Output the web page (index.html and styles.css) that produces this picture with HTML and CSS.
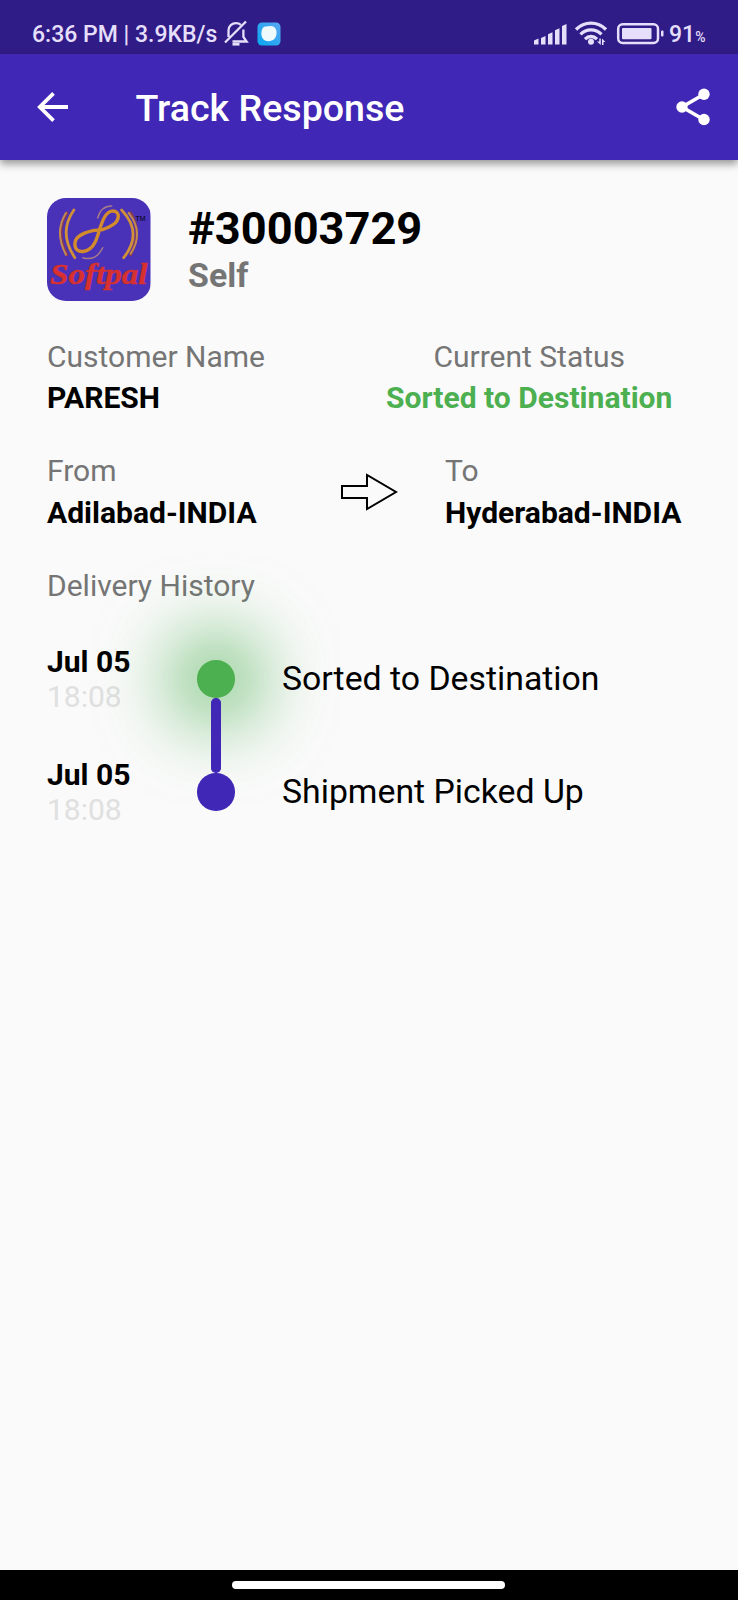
FILE: index.html
```html
<!DOCTYPE html>
<html lang="en">
<head>
<meta charset="utf-8">
<title>Track Response</title>
<link rel="stylesheet" href="styles.css">
</head>
<body>
<div class="screen">
  <div class="statusbar">
    <span class="clock">6:36 PM | 3.9KB/s</span>
    <svg class="bell" width="26" height="28" viewBox="0 0 26 28" fill="none" stroke="#e6dffb" stroke-width="2.3">
      <path d="M5.5 17V10.500C5.500 6 9 3.200 13 3.200c2 0 3.600.6 4.800 1.700M20.400 9.500v7.500l3.200 4.500H9.500M2 22.500 23 1.500"/>
      <path d="M9.500 24.300h7" stroke-width="2.600"/>
    </svg>
    <svg class="app" width="24" height="24" viewBox="0 0 24 24">
      <defs><linearGradient id="sky" x1="1" y1="0" x2="0" y2="1"><stop offset="0" stop-color="#5aa6f2"/><stop offset="1" stop-color="#08a8f0"/></linearGradient></defs>
      <rect x=".5" y=".5" width="23" height="23" rx="4.500" fill="url(#sky)"/>
      <path d="M7 4.800 13 4c4-.4 6.600 2.500 6.600 6.500 0 5.500-3.400 8.700-8 8.700-4.500 0-7.200-3-7.200-7.500 0-3 .8-5.500 2.600-6.900z" fill="#effafd"/>
    </svg>
    <svg class="signals" width="134" height="28" viewBox="0 0 134 28" fill="#e6dffb">
      <path d="M1 19.500 5.500 17.500V23.500H1zM8 17l4.500-2v8.500H8zM15 13.300l4.500-2v12.200H15zM22 9.300l4.500-2v16.200H22zM29 5l4.500-2v20.500H29z"/>
      <g fill="none" stroke="#e6dffb" stroke-width="3.300">
        <path d="M43 8.500C51.500 0 64.500 0 73 8.500M47.500 13.400c6-6 15-6 21 0M52 18.200c3.600-3.600 8.400-3.600 12 0"/>
      </g>
      <circle cx="58" cy="20.800" r="3"/>
      <path d="M64 20.500h2.300V17.500h1.500v6.500zM69 17.500l3.400 3.500H70.500V24H69z"/>
      <rect x="85.200" y="3.200" width="39.800" height="18.800" rx="4.500" fill="none" stroke="#e6dffb" stroke-width="2.500"/>
      <rect x="89" y="7" width="29.500" height="11.200" rx="1"/>
      <rect x="128" y="9.500" width="2.500" height="6" rx="1"/>
    </svg>
    <span class="level">91<small>%</small></span>
  </div>
  <header class="appbar">
    <svg class="back" width="32" height="32" viewBox="0 0 32 32" fill="none" stroke="#fff" stroke-width="3.800"><path d="M31 16H3.500M16.500 2.300 2.800 16l13.700 13.700"/></svg>
    <h1 class="title">Track Response</h1>
    <svg class="share" width="34" height="38" viewBox="0 0 34 38" fill="#fff" stroke="#fff"><path d="M28 6.300 6 19l22 12.700" fill="none" stroke-width="3.600"/><circle cx="28" cy="6.300" r="5.700" stroke="none"/><circle cx="6" cy="19" r="5.700" stroke="none"/><circle cx="28" cy="31.500" r="5.700" stroke="none"/></svg>
  </header>
  <main class="content">
    <section class="shipment">
      <svg class="logo" viewBox="0 0 104 104">
        <rect width="104" height="104" fill="#4932b8"/>
        <g fill="none" stroke-linecap="round">
          <path d="M51 20Q54 8 65 8M36 60q13 4 20-10" stroke="#a87b88" stroke-width="1.500"/>
          <path d="M55 32C45 32 28 36 28 46c0 12 15 9 20-1 5-9 7-31 18-32 8 0 7 10 0 14-3 2-7 4-11 5z" stroke="#d38b2b" stroke-width="3.400"/>
          <path d="M20 15Q8 34 20 57M84 15q12 19 0 42" stroke="#8a3a50" stroke-width="3"/>
          <path d="M27 12Q11 35 28 60M75 12q22 23 2 48" stroke="#d09038" stroke-width="2.800"/>
          <path d="M19 15Q7 34 19 57M82 15q16 20 2 41" stroke="#c08a55" stroke-width="2"/>
        </g>
        <text class="tm" x="89" y="23" textLength="10" lengthAdjust="spacingAndGlyphs">TM</text>
        <text class="brand" x="3" y="86.500" textLength="98" lengthAdjust="spacingAndGlyphs">Softpal</text>
      </svg>
      <div>
        <div class="number">#30003729</div>
        <div class="kind">Self</div>
      </div>
    </section>
    <section class="pair">
      <div><div class="label">Customer Name</div><div class="value">PARESH</div></div>
      <div class="status"><div class="label">Current Status</div><div class="value green">Sorted to Destination</div></div>
    </section>
    <section class="route">
      <div><div class="label">From</div><div class="value">Adilabad-INDIA</div></div>
      <svg width="58" height="38" viewBox="0 0 58 38" fill="none" stroke="#000" stroke-width="2"><path d="M2 13h25V2l29 17-29 17V25H2z"/></svg>
      <div class="to"><div class="label">To</div><div class="value">Hyderabad-INDIA</div></div>
    </section>
    <h2 class="label history">Delivery History</h2>
    <ul class="timeline">
      <li class="event">
        <div><div class="value day">Jul 05</div><div class="time">18:08</div></div>
        <span class="dot current"></span>
        <span class="what">Sorted to Destination</span>
      </li>
      <li class="event">
        <div><div class="value day">Jul 05</div><div class="time">18:08</div></div>
        <span class="dot"></span>
        <span class="what">Shipment Picked Up</span>
      </li>
    </ul>
  </main>
  <footer class="navbar"><span class="handle"></span></footer>
</div>
</body>
</html>
```
FILE: styles.css
```css
* { box-sizing: border-box; }
body {
  margin: 0;
  background: #fafafa;
  font-family: Roboto, "Liberation Sans", sans-serif;
  color: #000;
}
.screen {
  width: 738px;
  height: 1600px;
  display: flex;
  flex-direction: column;
  overflow: hidden;
}
.statusbar {
  height: 54.400px;
  flex: none;
  background: #301c86;
  color: #e6dffb;
  display: flex;
  align-items: flex-start;
  padding: 21px 30px 0 32px;
  font-size: 23px;
  font-weight: 500;
  line-height: 28px;
}
.clock { width: 191px; white-space: nowrap; }
.bell { margin-top: -1px; }
.app { margin: 1px 0 0 8px; }
.signals { margin-left: auto; }
.level { width: 39px; margin-left: 2px; white-space: nowrap; }
.level small { font-size: 14px; }
.appbar {
  height: 105.600px;
  flex: none;
  background: #4027b5;
  display: flex;
  align-items: center;
  padding: 0 28px 0 37px;
  box-shadow: 0 4px 8px rgba(0, 0, 0, .4);
  z-index: 1;
}
.title {
  margin: 1px auto 0 66.500px;
  font-size: 37.600px;
  font-weight: 500;
  line-height: 44px;
  color: #fff;
}
.content { flex: 1; padding: 37.700px 47px 0; }
.shipment { display: flex; align-items: center; gap: 37.600px; height: 103.500px; }
.logo { width: 103.500px; height: 103.500px; border-radius: 18.800px; }
.brand { font: italic bold 30px "Liberation Serif", serif; fill: #d6302f; stroke: #d6302f; stroke-width: .5px; }
.tm { font: 8px "Liberation Sans", sans-serif; }
.number { font-size: 45.200px; font-weight: 700; line-height: 53px; }
.kind { font-size: 33.900px; font-weight: 700; line-height: 41px; color: #757575; }
.pair {
  display: grid;
  grid-template-columns: 1fr 1fr;
  margin-top: 37.600px;
}
.status { text-align: center; padding-right: 1.500px; }
.label { font-size: 30px; line-height: 35.300px; color: #757575; font-weight: 400; }
.value { font-size: 30.050px; line-height: 35.300px; font-weight: 700; margin-top: 6px; white-space: nowrap; }
.green { color: #4caf50; }
.route {
  display: grid;
  grid-template-columns: 1fr 58px 1fr;
  align-items: center;
  margin-top: 38px;
}
.to { padding-left: 47px; }
.history { margin: 38px 0 19.500px; }
.timeline { list-style: none; margin: 0; padding: 0; }
.event {
  display: grid;
  grid-template-columns: 150.400px 37.600px 1fr;
  align-items: center;
  height: 112.900px;
}
.day { margin: 0; }
.time { font-size: 30px; line-height: 35.300px; color: #e0e0e0; }
.dot {
  width: 37.600px;
  height: 37.600px;
  border-radius: 50%;
  background: #4027b5;
  position: relative;
}
.current { background: #4caf50; box-shadow: 0 0 70px 29px rgba(76, 175, 80, .65); }
.current::after {
  content: "";
  position: absolute;
  left: 14px;
  top: 37.600px;
  width: 9.400px;
  height: 75.300px;
  border-radius: 4.700px;
  background: #4027b5;
}
.what { padding-left: 47px; font-size: 33.800px; line-height: 40px; position: relative; }
.navbar {
  height: 30px;
  flex: none;
  background: #000;
  display: flex;
  justify-content: center;
  padding: 11px 1px 0 0;
}
.handle { width: 273px; height: 8px; border-radius: 4px; background: #fff; }
```
